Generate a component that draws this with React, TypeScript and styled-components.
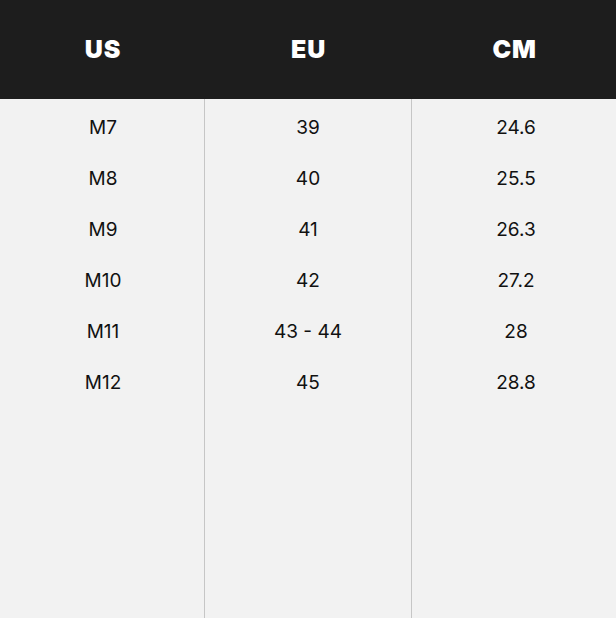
import React from "react";
import styled, { createGlobalStyle } from "styled-components";

const Global = createGlobalStyle`
  html, body { margin: 0; padding: 0; background: #f2f2f2; }
  body { font-family: "Inter", "Open Sans", sans-serif; }
`;

const Table = styled.div`
  width: 616px;
  height: 618px;
  display: flex;
  flex-direction: column;
  background: #f2f2f2;
  overflow: hidden;
`;

const Header = styled.div`
  height: 99px;
  background: #1d1d1d;
  display: grid;
  grid-template-columns: 204px 207px 205px;
  align-items: center;
`;

const HeadCell = styled.div`
  color: #ffffff;
  font-size: 25px;
  font-weight: 900;
  text-align: center;
  letter-spacing: 0.8px;
  padding-bottom: 2px;
  padding-left: 2px;
`;

const Body = styled.div`
  flex: 1;
  display: grid;
  grid-template-columns: 204px 207px 205px;
`;

const Column = styled.div<{ $divider?: boolean }>`
  border-left: ${(p) => (p.$divider ? "1px solid #c6c6c6" : "none")};
  padding-top: 3px;
  display: flex;
  flex-direction: column;
`;

const Cell = styled.div<{ $shift?: number }>`
  height: 51px;
  display: flex;
  align-items: center;
  justify-content: center;
  font-size: 19px;
  color: #111111;
  padding-left: ${(p) => p.$shift ?? 0}px;
`;

const us = ["M7", "M8", "M9", "M10", "M11", "M12"];
const eu = ["39", "40", "41", "42", "43 - 44", "45"];
const cm = ["24.6", "25.5", "26.3", "27.2", "28", "28.8"];

export default function App() {
  return (
    <>
      <Global />
      <Table>
        <Header>
          <HeadCell>US</HeadCell>
          <HeadCell>EU</HeadCell>
          <HeadCell>CM</HeadCell>
        </Header>
        <Body>
          <Column>
            {us.map((v) => (
              <Cell key={v} $shift={2}>{v}</Cell>
            ))}
          </Column>
          <Column $divider>
            {eu.map((v) => (
              <Cell key={v}>{v}</Cell>
            ))}
          </Column>
          <Column $divider>
            {cm.map((v) => (
              <Cell key={v} $shift={4}>{v}</Cell>
            ))}
          </Column>
        </Body>
      </Table>
    </>
  );
}
